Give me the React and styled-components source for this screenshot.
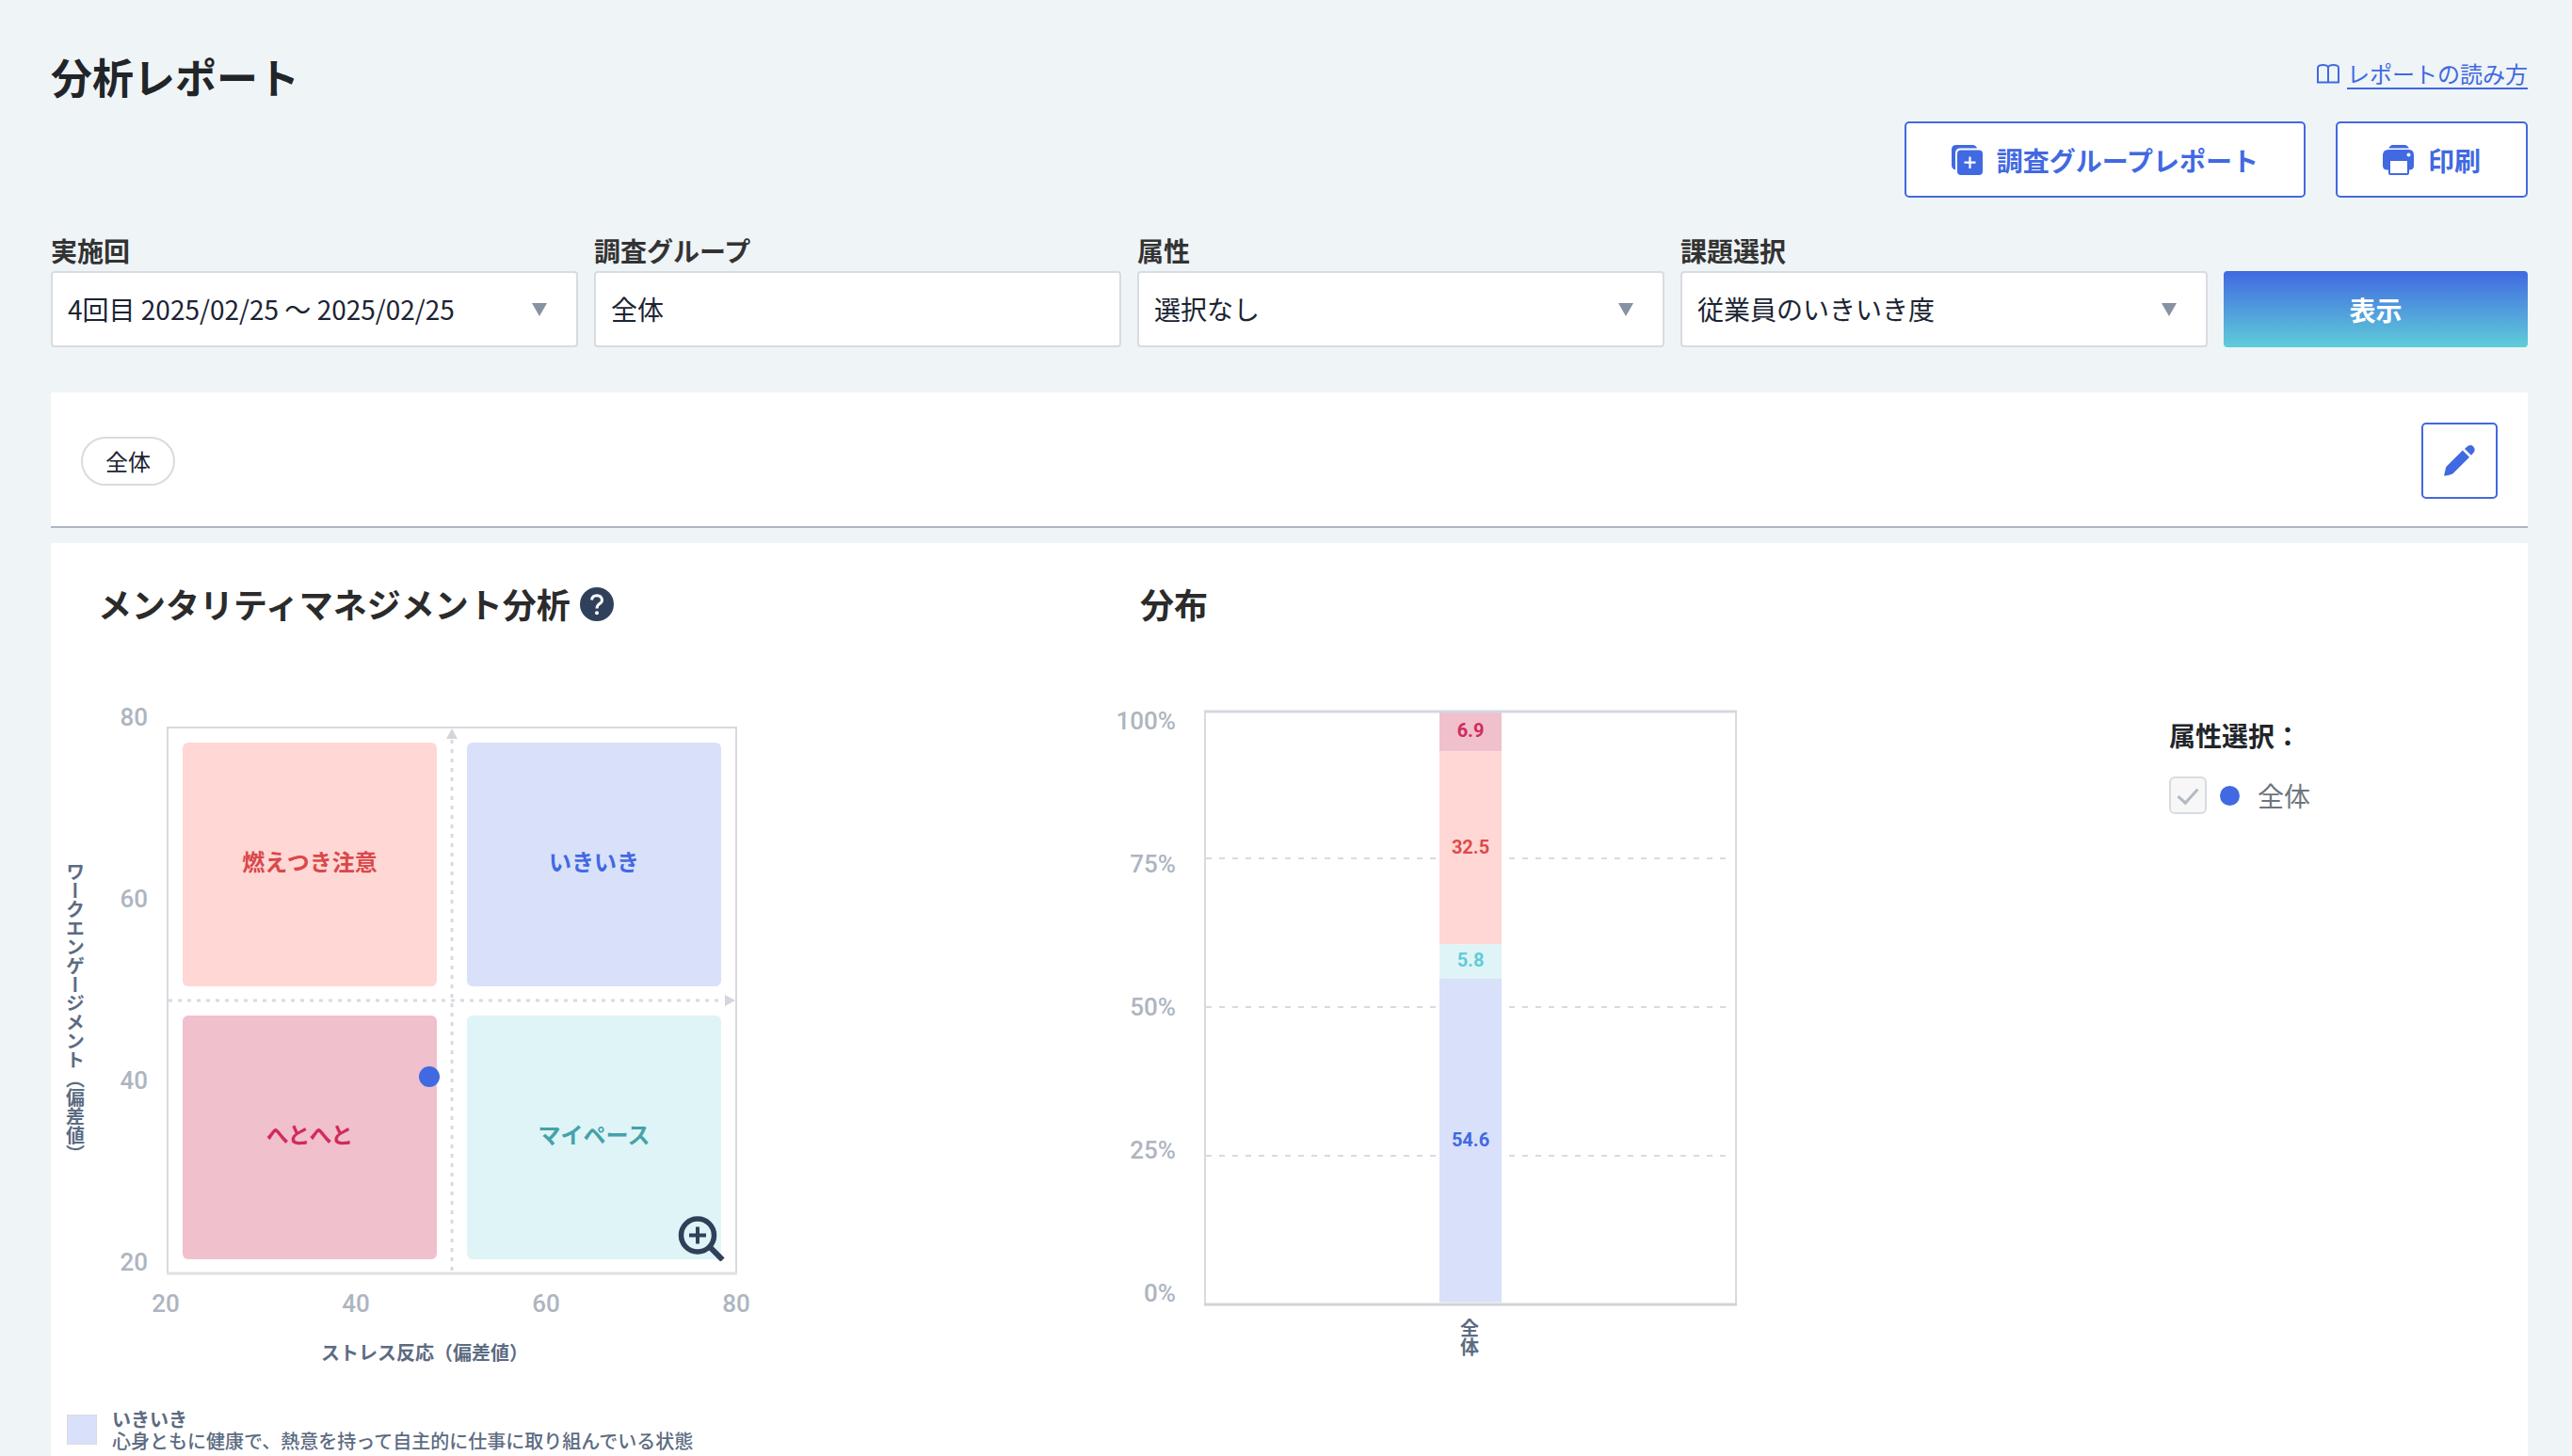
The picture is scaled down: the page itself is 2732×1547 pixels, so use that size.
import React from 'react';
import styled, { createGlobalStyle } from 'styled-components';

const GlobalStyle = createGlobalStyle`
  * {
    box-sizing: border-box;
  }
  body {
    margin: 0;
    background: #eff4f7;
    color: #212529;
    font-family: 'Noto Sans CJK JP', sans-serif;
    font-size: 28px;
  }
  button,
  input,
  select {
    font-family: inherit;
  }
`;

const Page = styled.div`
  display: flex;
  flex-direction: column;
  min-height: 100vh;
  padding: 51px 47px 0 54px;
`;

const Header = styled.header`
  display: flex;
  justify-content: space-between;
  align-items: flex-start;
`;

const Title = styled.h1`
  margin: 0;
  font-size: 44px;
  font-weight: 700;
  line-height: 60px;
`;

const HeaderSide = styled.div`
  display: flex;
  flex-direction: column;
  align-items: flex-end;
  gap: 34px;
`;

const GuideLink = styled.a`
  display: flex;
  align-items: center;
  gap: 8px;
  margin-top: 12px;
  color: #4169e1;
  font-size: 24px;
  line-height: 30px;
  text-decoration: none;

  span {
    border-bottom: 2px solid #4169e1;
  }
`;

const ButtonRow = styled.div`
  display: flex;
  gap: 32px;
`;

const OutlineButton = styled.button`
  display: flex;
  align-items: center;
  justify-content: center;
  gap: 14px;
  height: 81px;
  padding: ${(props) => {
    return props.$square ? '0' : '0 48px';
  }};
  width: ${(props) => {
    return props.$square ? '81px' : 'auto';
  }};
  border: 2px solid #4169e1;
  border-radius: 5px;
  background: #fff;
  color: #4169e1;
  font-size: 28px;
  font-weight: 700;
  cursor: pointer;
`;

const Filters = styled.form`
  display: grid;
  grid-template-columns: repeat(4, 560fr) 323fr;
  align-items: end;
  gap: 17px;
  margin-top: 36px;
`;

const Field = styled.div`
  display: flex;
  flex-direction: column;
`;

const FieldLabel = styled.label`
  margin-bottom: 2px;
  color: #333;
  font-weight: 700;
  line-height: 40px;
`;

const Control = styled.div`
  position: relative;

  select,
  input {
    display: block;
    width: 100%;
    height: 81px;
    padding: 0 16px 2px;
    border: 2px solid #d8dbe1;
    border-radius: 4px;
    background: #fff;
    color: #1b2433;
    font-size: 28px;
    appearance: none;
    opacity: 1;
  }

  svg {
    position: absolute;
    top: 34px;
    right: 33px;
    pointer-events: none;
  }
`;

const SubmitButton = styled.button`
  height: 81px;
  border: 0;
  border-radius: 4px;
  background: linear-gradient(#4169e1, #5fcdd8);
  color: #fff;
  font-size: 28px;
  font-weight: 700;
  cursor: pointer;
`;

const SelectionBar = styled.section`
  display: flex;
  align-items: center;
  justify-content: space-between;
  margin-top: 48px;
  padding: 32px 32px 29px;
  border-bottom: 2px solid #b0b6c1;
  background: #fff;
`;

const Chip = styled.span`
  padding: 0 24px;
  border: 2px solid #d8dbe1;
  border-radius: 26px;
  color: #1b2433;
  font-size: 24px;
  line-height: 48px;
`;

const Report = styled.main`
  display: grid;
  flex: 1;
  grid-template-columns: 1110fr 1140fr 381fr;
  align-items: start;
  margin-top: 16px;
  padding-top: 38px;
  background: #fff;
`;

const SectionTitle = styled.h2`
  display: flex;
  align-items: center;
  gap: 10px;
  margin: 0 0 73px;
  padding-left: ${(props) => {
    return props.$indent;
  }};
  color: #2b2b2b;
  font-size: 36px;
  font-weight: 700;
  line-height: 52px;
`;

const HelpButton = styled.button`
  display: flex;
  padding: 2px 0 0;
  border: 0;
  background: none;
  cursor: pointer;
`;

const ChartBox = styled.div`
  position: relative;
  width: 760px;

  svg {
    display: block;
  }
`;

const ZoomButton = styled.button`
  position: absolute;
  top: 552px;
  left: 666px;
  padding: 0;
  border: 0;
  background: none;
  cursor: pointer;
`;

const Tick = styled.text`
  fill: #adb5c0;
  font-family: Roboto, sans-serif;
  font-size: 26px;
  font-weight: 500;
`;

const AxisTitle = styled.text`
  fill: #5c6b82;
  font-size: 20px;
  font-weight: 700;
`;

const VerticalTitle = styled(AxisTitle)`
  writing-mode: vertical-rl;
`;

const AreaName = styled.text`
  font-size: 24px;
  font-weight: 700;
  text-anchor: middle;
`;

const BarValue = styled.text`
  font-family: Roboto, sans-serif;
  font-size: 20px;
  font-weight: 700;
  text-anchor: middle;
`;

const Legend = styled.dl`
  display: grid;
  grid-template-columns: 32px 1fr;
  column-gap: 16px;
  align-items: center;
  margin: 36px 0 0 17px;
  color: #5c6b82;
  font-size: 20px;
  line-height: 23px;

  dt {
    font-weight: 700;
  }
  dd {
    margin: 0;
    font-weight: 500;
  }
`;

const Swatch = styled.div`
  height: 32px;
  border: 1px solid #d8dbe1;
  background: ${(props) => {
    return props.$color;
  }};
`;

const AttributePanel = styled.fieldset`
  margin: 146px 0 0;
  padding: 0;
  border: 0;

  legend {
    padding: 0;
    font-weight: 700;
    line-height: 40px;
  }
`;

const AttributeItem = styled.label`
  display: flex;
  align-items: center;
  margin-top: 24px;
  color: #6c757d;
  line-height: 40px;
`;

const CheckBox = styled.input`
  display: flex;
  justify-content: center;
  width: 40px;
  height: 40px;
  margin: 0;
  border: 2px solid #d8dbe1;
  border-radius: 6px;
  background: #f7f7f7;
  appearance: none;

  &:checked::after {
    content: '';
    width: 9px;
    height: 18px;
    margin-top: 6px;
    border: solid #b3b9c4;
    border-width: 0 3px 3px 0;
    transform: rotate(42deg);
  }
`;

const SeriesDot = styled.span`
  width: 21px;
  height: 21px;
  margin: 0 19px 0 14px;
  border-radius: 50%;
  background: #4169e1;
`;

const BookIcon = () => {
  return (
    <svg width='24' height='22' viewBox='0 0 24 22' fill='none' stroke='currentColor' strokeWidth='2' aria-hidden='true'>
      <path d='M12 19V4C12 2 9 1 6.500 1S1 2 1 4V20.500M12 4C12 2 15 1 17.500 1S23 2 23 4V20.500M1 19.500H23' />
    </svg>
  );
};

const GroupIcon = () => {
  return (
    <svg width='34' height='32' viewBox='0 0 34 32' aria-hidden='true'>
      <path d='M5 0H22Q26 0 27 3.500H9Q4 3.500 4 9V26.500Q0 25.500 0 21.500V5Q0 0 5 0Z' fill='currentColor' />
      <rect x='6' y='5.500' width='27' height='26.500' rx='4' fill='currentColor' />
      <path d='M19.500 12.500V25M13.500 18.700H25.500' stroke='#fff' strokeWidth='2.200' />
    </svg>
  );
};

const PrintIcon = () => {
  return (
    <svg width='34' height='32' viewBox='0 0 34 32' aria-hidden='true'>
      <path d='M10 0H24Q26 0 28 3.600H6Q8 0 10 0Z' fill='currentColor' />
      <path d='M6 5H28Q33 5 33 11V22Q33 26 29 26.500H4Q0 26 0 22V11Q0 5 6 5Z' fill='currentColor' />
      <rect x='7' y='16' width='20' height='15' rx='1' fill='#fff' stroke='currentColor' strokeWidth='2' />
      <circle cx='27.500' cy='10.500' r='2' fill='#fff' />
    </svg>
  );
};

const PencilIcon = () => {
  return (
    <svg width='33' height='33' viewBox='0 0 33 33' fill='currentColor' aria-hidden='true'>
      <path d='M0 32.500L2 24Q2.300 23 3 22.200L19.800 5.600L27 12.800L10.200 29.500Q9.500 30.300 8.500 30.800Q4 32.700 0 32.500Z' />
      <path d='M22 4L24 2Q28 -1.500 31.200 1.500Q34.300 5 31 8.500L29 10.800Z' />
    </svg>
  );
};

const HelpIcon = () => {
  return (
    <svg width='36' height='36' viewBox='0 0 36 36' fill='none' aria-hidden='true'>
      <circle cx='18' cy='18' r='18' fill='#2f405a' />
      <path d='M12.500 13.500Q13 8.800 18 8.800T23.500 13.500Q23.500 15.800 20.800 17.600T18 22.500' stroke='#fff' strokeWidth='3' />
      <circle cx='18' cy='27.300' r='2' fill='#fff' />
    </svg>
  );
};

const ZoomIcon = () => {
  return (
    <svg width='50' height='48' viewBox='0 0 50 48' fill='none' stroke='#2f405a' aria-hidden='true'>
      <circle cx='21' cy='20.500' r='17.500' strokeWidth='5.500' />
      <path d='M33 32L47.500 46.500' strokeWidth='6' />
      <path d='M21 11.500V29.500M12 20.500H30' strokeWidth='4' />
    </svg>
  );
};

const filters = [
  { id: 'round', label: '実施回', value: '4回目 2025/02/25 〜 2025/02/25' },
  { id: 'group', label: '調査グループ', value: '全体', text: true },
  { id: 'attribute', label: '属性', value: '選択なし' },
  { id: 'theme', label: '課題選択', value: '従業員のいきいき度' },
];

const areas = [
  { name: '燃えつき注意', x: 140, y: 49, fill: '#ffd7d5', color: '#d9484a' },
  { name: 'いきいき', x: 442, y: 49, fill: '#d9e0f9', color: '#4169e1' },
  { name: 'へとへと', x: 140, y: 339, fill: '#f0c0cd', color: '#d22a5c' },
  { name: 'マイペース', x: 442, y: 339, fill: '#dff4f7', color: '#44a2a9' },
];

const shares = [
  { value: 6.9, fill: '#f0c0cd', color: '#d22a5c' },
  { value: 32.5, fill: '#ffd7d5', color: '#dd4b48' },
  { value: 5.8, fill: '#dff4f7', color: '#5fcdd8' },
  { value: 54.6, fill: '#d9e0f9', color: '#4169e1' },
];

const MatrixChart = () => {
  return (
    <svg width='760' height='720' viewBox='0 0 760 720' role='img' aria-label='メンタリティマネジメント分析'>
      <path d='M124 614V33H728V614' fill='none' stroke='#d8dae0' strokeWidth='2' />
      <path d='M123 613H729' stroke='#dfe1e5' strokeWidth='3' />
      {areas.map((area) => {
        return (
          <g key={area.name}>
            <rect x={area.x} y={area.y} width='270' height='259' rx='6' fill={area.fill} />
            <AreaName x={area.x + 135} y={area.y + 136} fill={area.color}>
              {area.name}
            </AreaName>
          </g>
        );
      })}
      <path d='M426 46V612M125 323H714' stroke='#d8dae0' strokeWidth='3' strokeDasharray='4 6' />
      <path d='M420 45L426 34L432 45ZM716 317L727 323L716 329Z' fill='#d3d6dc' />
      <circle cx='402' cy='404' r='11' fill='#4169e1' />
      {[80, 60, 40, 20].map((n, i) => {
        return (
          <Tick key={n} x='103' y={31 + i * 193} textAnchor='end'>
            {n}
          </Tick>
        );
      })}
      {[20, 40, 60, 80].map((n, i) => {
        return (
          <Tick key={n} x={122 + i * 202} y='654' textAnchor='middle'>
            {n}
          </Tick>
        );
      })}
      <AxisTitle x='287' y='705'>
        ストレス反応（偏差値）
      </AxisTitle>
      <VerticalTitle x='26' y='176'>
        ワークエンゲージメント（偏差値）
      </VerticalTitle>
    </svg>
  );
};

const ShareChart = () => {
  const top = 15;
  const scale = 6.3;
  let y = top;

  return (
    <svg width='760' height='720' viewBox='0 0 760 720' role='img' aria-label='分布'>
      <path d='M116 15V646M680 15V646' stroke='#d8dae0' strokeWidth='2' />
      <path d='M117 172H674M117 330H674M117 488H674' stroke='#d8dae0' strokeWidth='2' strokeDasharray='6 8' />
      <path d='M115 646H681' stroke='#cfd3d8' strokeWidth='3' />
      {shares.map((share) => {
        const height = share.value * scale;
        const start = y;
        y += height;
        return (
          <g key={share.value}>
            <rect x='365' y={start} width='66' height={height} fill={share.fill} />
            <BarValue x='398' y={start + height / 2 + 6} fill={share.color}>
              {share.value}
            </BarValue>
          </g>
        );
      })}
      <path d='M115 16H681' stroke='#d4d8dd' strokeWidth='3' />
      {[100, 75, 50, 25, 0].map((n, i) => {
        return (
          <Tick key={n} x='85' y={35 + i * 152} textAnchor='end'>
            {n}%
          </Tick>
        );
      })}
      <VerticalTitle x='397' y='661'>
        全体
      </VerticalTitle>
    </svg>
  );
};

const App = () => {
  return (
    <Page>
      <GlobalStyle />
      <Header>
        <Title>分析レポート</Title>
        <HeaderSide>
          <GuideLink href='#guide'>
            <BookIcon />
            <span>レポートの読み方</span>
          </GuideLink>
          <ButtonRow>
            <OutlineButton type='button'>
              <GroupIcon />
              調査グループレポート
            </OutlineButton>
            <OutlineButton type='button'>
              <PrintIcon />
              印刷
            </OutlineButton>
          </ButtonRow>
        </HeaderSide>
      </Header>

      <Filters>
        {filters.map((filter) => {
          return (
            <Field key={filter.id}>
              <FieldLabel htmlFor={filter.id}>{filter.label}</FieldLabel>
              <Control>
                {filter.text ? (
                  <input id={filter.id} type='text' defaultValue={filter.value} />
                ) : (
                  <>
                    <select id={filter.id}>
                      <option>{filter.value}</option>
                    </select>
                    <svg width='16' height='14' viewBox='0 0 16 14' aria-hidden='true'>
                      <path d='M0 0H16L8 14Z' fill='#8792a2' />
                    </svg>
                  </>
                )}
              </Control>
            </Field>
          );
        })}
        <SubmitButton type='button'>表示</SubmitButton>
      </Filters>

      <SelectionBar>
        <Chip>全体</Chip>
        <OutlineButton type='button' $square aria-label='編集'>
          <PencilIcon />
        </OutlineButton>
      </SelectionBar>

      <Report>
        <section>
          <SectionTitle $indent='50px'>
            メンタリティマネジメント分析
            <HelpButton type='button' aria-label='ヘルプ'>
              <HelpIcon />
            </HelpButton>
          </SectionTitle>
          <ChartBox>
            <MatrixChart />
            <ZoomButton type='button' aria-label='拡大'>
              <ZoomIcon />
            </ZoomButton>
          </ChartBox>
          <Legend>
            <Swatch $color='#d9e0f9' />
            <div>
              <dt>いきいき</dt>
              <dd>心身ともに健康で、熱意を持って自主的に仕事に取り組んでいる状態</dd>
            </div>
          </Legend>
        </section>
        <section>
          <SectionTitle $indent='47px'>分布</SectionTitle>
          <ChartBox>
            <ShareChart />
          </ChartBox>
        </section>
        <AttributePanel>
          <legend>属性選択：</legend>
          <AttributeItem>
            <CheckBox type='checkbox' defaultChecked disabled />
            <SeriesDot />
            全体
          </AttributeItem>
        </AttributePanel>
      </Report>
    </Page>
  );
};

export default App;
